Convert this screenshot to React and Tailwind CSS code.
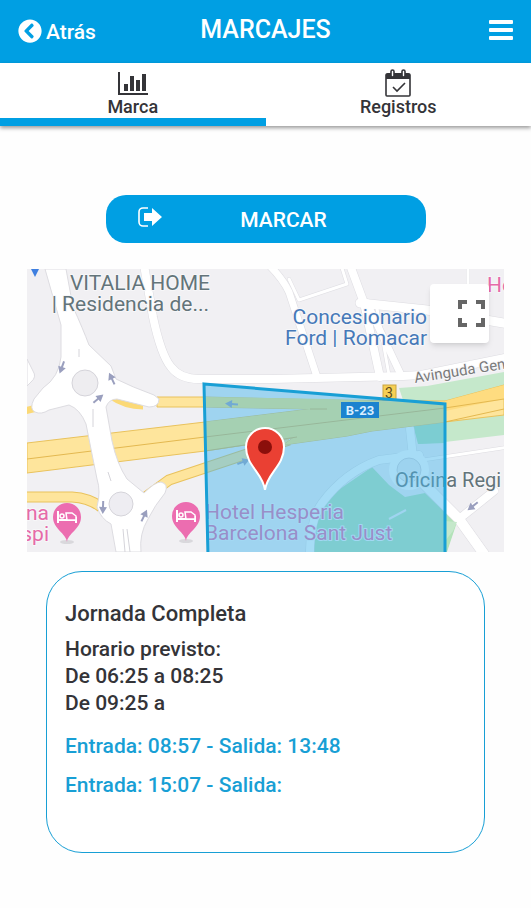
import { useState } from "react";
import { FaChevronCircleLeft } from "react-icons/fa";

const BarChartIcon = () => (
  <svg viewBox="0 0 32 25" className="w-8 h-[25px]" fill="currentColor" aria-hidden="true">
    <path d="M1 1h2v21h28v2H1z" />
    <path d="M7 13h4v7H7zM13 5h4v15h-4zM19 9h4v11h-4zM25 3h4v17h-4z" />
  </svg>
);

const CalendarCheckIcon = () => (
  <svg viewBox="0 0 26 28" className="w-[26px] h-7" fill="none" aria-hidden="true">
    <rect x="1" y="5" width="24" height="22" rx="1" stroke="currentColor" strokeWidth="1.6" />
    <path d="M1 10V6a2 2 0 0 1 2-2h20a2 2 0 0 1 2 2v4z" fill="currentColor" />
    <rect x="6" y="1" width="3" height="7" rx="1.5" fill="white" stroke="currentColor" strokeWidth="1.6" />
    <rect x="17" y="1" width="3" height="7" rx="1.5" fill="white" stroke="currentColor" strokeWidth="1.6" />
    <path d="m8 18 4 4 8-8" stroke="currentColor" strokeWidth="1.6" />
  </svg>
);

const ExitIcon = () => (
  <svg viewBox="0 0 24 20" className="w-6 h-5" aria-hidden="true">
    <path d="M10 1H5a4 4 0 0 0-4 4v10a4 4 0 0 0 4 4h5" fill="none" stroke="currentColor" strokeWidth="1.6" />
    <path d="M6 6h8V1l10 9-10 9v-5H6z" fill="currentColor" />
  </svg>
);

const MenuIcon = () => (
  <svg viewBox="0 0 24 20" className="w-6 h-5" fill="currentColor" aria-hidden="true">
    <rect width="24" height="4" rx="1" />
    <rect y="8" width="24" height="4" rx="1" />
    <rect y="16" width="24" height="4" rx="1" />
  </svg>
);

const FullscreenIcon = () => (
  <svg viewBox="0 0 27 27" className="w-[27px] h-[27px]" fill="none" stroke="#666" strokeWidth="4" aria-hidden="true">
    <path d="M2 9V2h7M18 2h7v7M25 18v7h-7M9 25H2v-7" />
  </svg>
);

const HotelPin = ({ x, y }) => (
  <g transform={`translate(${x} ${y})`}>
    <ellipse cx="0" cy="25" rx="7" ry="2" fill="#d9d8dc" />
    <path d="M0 25C-1 16-14 12-14 0a14 14 0 0 1 28 0C14 12 1 16 0 25z" fill="#ec6db0" />
    <path d="M-9-6V6M-9 3H9M9 6V0" stroke="white" strokeWidth="2" fill="none" />
    <circle cx="-5" cy="-1" r="2" stroke="white" strokeWidth="1.5" fill="none" />
    <path d="M-1-4h6l4 3v4H0z" fill="#ec6db0" stroke="white" strokeWidth="1.5" />
  </g>
);

const Arrow = ({ x, y, angle }) => (
  <g transform={`translate(${x} ${y}) rotate(${angle})`}>
    <path d="M-6 0h7" stroke="#9a9fbe" strokeWidth="2" />
    <path d="M0-4 7 0 0 4z" fill="#9a9fbe" />
  </g>
);

const roads = [
  { d: "M117-4 126 48Q134 86 144 98 153 110 172 110H245L376 107 394 106 482 88", width: 8 },
  { d: "M262 10 272 31 320 15 314-4", width: 3 },
  { d: "M242-4Q256 10 262 23L290 108", width: 7 },
  { d: "M323-4 337 34 353 108", width: 8 },
  { d: "M340 34 374 106", width: 7 },
  { d: "M349 34 362 106", width: 3 },
  { d: "M333 34 400 41 482 55", width: 9 },
  { d: "M441-4V15", width: 3 },
  { d: "M283 290Q282 252 295 234 318 203 352 191L392 186", width: 8 },
  { d: "M383 160 386 188", width: 8 },
  { d: "M396 191 482 178", width: 3 },
  { d: "M396 214 432 250 462 292", width: 10 },
  { d: "M432 250 467 222", width: 8 },
];

const MapView = () => (
  <svg
    viewBox="0 0 477 283"
    className="block w-full h-auto"
    role="img"
    aria-label="Mapa"
    fontFamily="Roboto, sans-serif"
    fontSize="21"
    fontWeight="400"
  >
    <rect width="477" height="283" fill="#f1f0f3" />

    {/* Green areas */}
    <path d="M372 119 400 117 477 103V118L418 134 376 131z" fill="#c5e8cb" />
    <path d="M386 155 418 150 477 144V166L418 173 392 175z" fill="#c5e8cb" />
    <path d="M386 156 418 152V174L391 175z" fill="#aee2bb" />
    <path d="M285 283 290 248 307 224 345 198 362 216 378 228 398 224 418 243 430 253 420 283z" fill="#b3e3b9" />

    {/* Local streets */}
    <g fill="none" strokeLinecap="round" strokeLinejoin="round">
      {roads.map((road) => (
        <path key={road.d} d={road.d} stroke="#dddce1" strokeWidth={road.width + 1} />
      ))}
      {roads.map((road) => (
        <path key={road.d} d={road.d} stroke="white" strokeWidth={road.width} />
      ))}
    </g>
    <circle cx="382" cy="201" r="20" fill="white" />
    <circle cx="382" cy="201" r="12" fill="#eeedf1" stroke="#d5d4da" />
    <path d="M362 250 379 241" stroke="#f1f0f3" strokeWidth="2" />
    <path d="M418 252 430 253 426 262 418 272z" fill="#c5e8cb" />

    {/* Motorway and slip roads */}
    <g fill="none" strokeLinejoin="round">
      <path d="M-2 228H45Q62 229 74 238M116 230 142 211 178 199 223 184 262 171" stroke="#e9c25c" strokeWidth="11" />
      <path d="M-2 228H45Q62 229 74 238M116 230 142 211 178 199 223 184 262 171" stroke="#fee59c" strokeWidth="9" />
      <path d="M-3 142 14 138 36 127M84 127Q98 137 116 137" stroke="#fbd976" strokeWidth="7" />
    </g>
    <path
      d="M0 174 178 153 283 140 178 138H130V128H178L300 131 418 132 477 116V146L418 153 345 162 320 167 256 176 266 169 178 182 0 204z"
      fill="#fee59c"
      stroke="#e9c25c"
    />
    <path d="M178 153 283 140 178 138V128L300 130 418 135V153L345 162 320 167 256 176 266 169 178 182z" fill="#fee97d" />
    <path d="M418 132 477 116V130L418 142z" fill="#fedc80" />
    <path
      d="M0 190 178 168 418 139 477 130M178 182 270 168M283 140H300M418 153 477 140"
      fill="none"
      stroke="#e3b850"
    />

    {/* Roundabouts */}
    <path
      d="M18 0 34 56V88Q32 108 16 119L7 130Q2 140 8 143 14 146 22 141L42 136Q53 140 59 155L70 210Q74 222 70 238 74 250 84 255L89 283H114Q112 265 121 250 128 236 138 224 142 215 134 213 128 213 117 224L100 210Q90 195 85 172L79 138Q82 130 90 130L122 138Q132 138 132 130L127 126Q105 118 89 110L84 97 62 76Q56 60 46 38L39 0z"
      fill="white"
      stroke="#dddce1"
    />
    <path d="M0 90 6 102Q10 108 4 113L0 117z" fill="white" stroke="#dddce1" />
    <circle cx="58" cy="114" r="13" fill="#eeedf0" stroke="#d5d4da" />
    <circle cx="94" cy="235" r="12" fill="#eeedf2" stroke="#d5d4da" />
    <path d="M52 80V88M66 140V158M81 203 84 212M96 260 98 283M100 260 103 283" stroke="#d5d4da" />
    <path d="M4 0H12L8 8z" fill="#3f7fe0" />

    <Arrow x={35} y={98} angle={110} />
    <Arrow x={85} y={110} angle={-115} />
    <Arrow x={71} y={130} angle={-40} />
    <Arrow x={76} y={238} angle={92} />
    <Arrow x={117} y={247} angle={-65} />
    <Arrow x={205} y={135} angle={184} />
    <Arrow x={216} y={193} angle={-20} />
    <Arrow x={446} y={237} angle={142} />

    {/* Place labels */}
    <g stroke="#f7f7f9" strokeWidth="2" strokeLinejoin="round" paintOrder="stroke">
      <g fill="#63747a" textAnchor="end">
        <text x="183" y="21">VITALIA HOME</text>
        <text x="182" y="42">| Residencia de...</text>
      </g>
      <g fill="#4679b8" textAnchor="end">
        <text x="400" y="55">Concesionario</text>
        <text x="400" y="76">Ford | Romacar</text>
      </g>
      <g fill="#e66aa8">
        <text x="460" y="23">He</text>
        <text x="22" y="251" textAnchor="end">na</text>
        <text x="22" y="272" textAnchor="end">spi</text>
        <text x="178" y="250">Hotel Hesperia</text>
        <text x="178" y="271">Barcelona Sant Just</text>
      </g>
      <text x="368" y="218" fill="#63747a" fontSize="20">Oficina Regi</text>
      <text transform="translate(388 114) rotate(-9)" fill="#7a7a7a" fontSize="15">Avinguda Gen</text>
    </g>
    <HotelPin x={40} y={248} />
    <HotelPin x={159} y={247} />
    <rect x="356" y="116" width="13" height="15" fill="#f6cf55" stroke="#c9a542" />
    <text x="362" y="129" textAnchor="middle" fontSize="14" fill="#5c4a1c">3</text>

    {/* Allowed clock-in zone */}
    <path d="M177 115 418 135V287H181z" fill="#45b5ec" fillOpacity="0.48" stroke="#189fd5" strokeWidth="3" />
    <rect x="314" y="133" width="38" height="16" fill="#1c83cf" />
    <text x="333" y="146" textAnchor="middle" fontSize="13" fontWeight="700" fill="#d9efff">B-23</text>

    {/* Current position */}
    <path
      d="M238 221C236 204 219 197 219 178a19 19 0 0 1 38 0C257 197 240 204 238 221z"
      fill="#ea4033"
      stroke="white"
      strokeWidth="2"
    />
    <circle cx="238" cy="178" r="7" fill="#8b0f0b" />
  </svg>
);

const tabs = [
  { id: "marca", label: "Marca", icon: BarChartIcon },
  { id: "registros", label: "Registros", icon: CalendarCheckIcon },
];

const schedule = ["De 06:25 a 08:25", "De 09:25 a"];

const records = ["Entrada: 08:57 - Salida: 13:48", "Entrada: 15:07 - Salida:"];

const App = () => {
  const [activeTab, setActiveTab] = useState("marca");

  return (
    <div className="min-h-screen bg-[#fefefe] font-[Roboto,sans-serif] font-medium text-[#343438]">
      {/* Header */}
      <header className="grid grid-cols-3 items-center h-[63px] px-[18px] bg-[#009fe3] text-white">
        <button type="button" className="flex items-center gap-1 justify-self-start pb-0.5 text-[21px]">
          <FaChevronCircleLeft className="w-6 h-6" />
          <span className="pt-1">Atrás</span>
        </button>
        <h1 className="justify-self-center pb-1 text-[25px]">MARCAJES</h1>
        <button type="button" aria-label="Menú" className="justify-self-end pb-1">
          <MenuIcon />
        </button>
      </header>

      {/* Tabs */}
      <nav className="grid grid-cols-2 bg-white shadow-[0_2px_4px_rgba(0,0,0,0.4)]">
        {tabs.map(({ id, label, icon: Icon }) => (
          <button
            key={id}
            type="button"
            onClick={() => setActiveTab(id)}
            className={`flex flex-col items-center h-[63px] pt-1.5 border-b-8 text-[18px] leading-5 ${
              activeTab === id ? "border-[#009fe3]" : "border-transparent"
            }`}
          >
            <span className="flex items-center h-7">
              <Icon />
            </span>
            {label}
          </button>
        ))}
      </nav>

      <main className="pt-[69px] pb-14">
        <button
          type="button"
          className="grid grid-cols-[24px_1fr] gap-3 items-center w-80 h-12 mx-auto px-8 rounded-[20px] bg-[#009fe3] text-white text-[21px]"
        >
          <span className="pb-1">
            <ExitIcon />
          </span>
          <span className="pt-1">MARCAR</span>
        </button>

        <div className="relative mx-[27px] mt-[26px]">
          <MapView />
          <button
            type="button"
            aria-label="Pantalla completa"
            className="absolute top-[15px] right-[15px] flex items-center justify-end w-[59px] h-[59px] pr-1 rounded-sm bg-white shadow-md"
          >
            <FullscreenIcon />
          </button>
        </div>

        {/* Work day summary */}
        <section className="mx-[46px] mt-[19px] min-h-[282px] px-[18px] py-7 border border-[#189fd5] rounded-[36px] bg-white text-[21px]">
          <h2 className="text-[22px] leading-7">Jornada Completa</h2>
          <div className="mt-2 leading-[27px]">
            <p>Horario previsto:</p>
            {schedule.map((item) => (
              <p key={item}>{item}</p>
            ))}
          </div>
          <div className="mt-2.5 leading-[39px] text-[#189fd5]">
            {records.map((item) => (
              <p key={item}>{item}</p>
            ))}
          </div>
        </section>
      </main>
    </div>
  );
};

export default App;
